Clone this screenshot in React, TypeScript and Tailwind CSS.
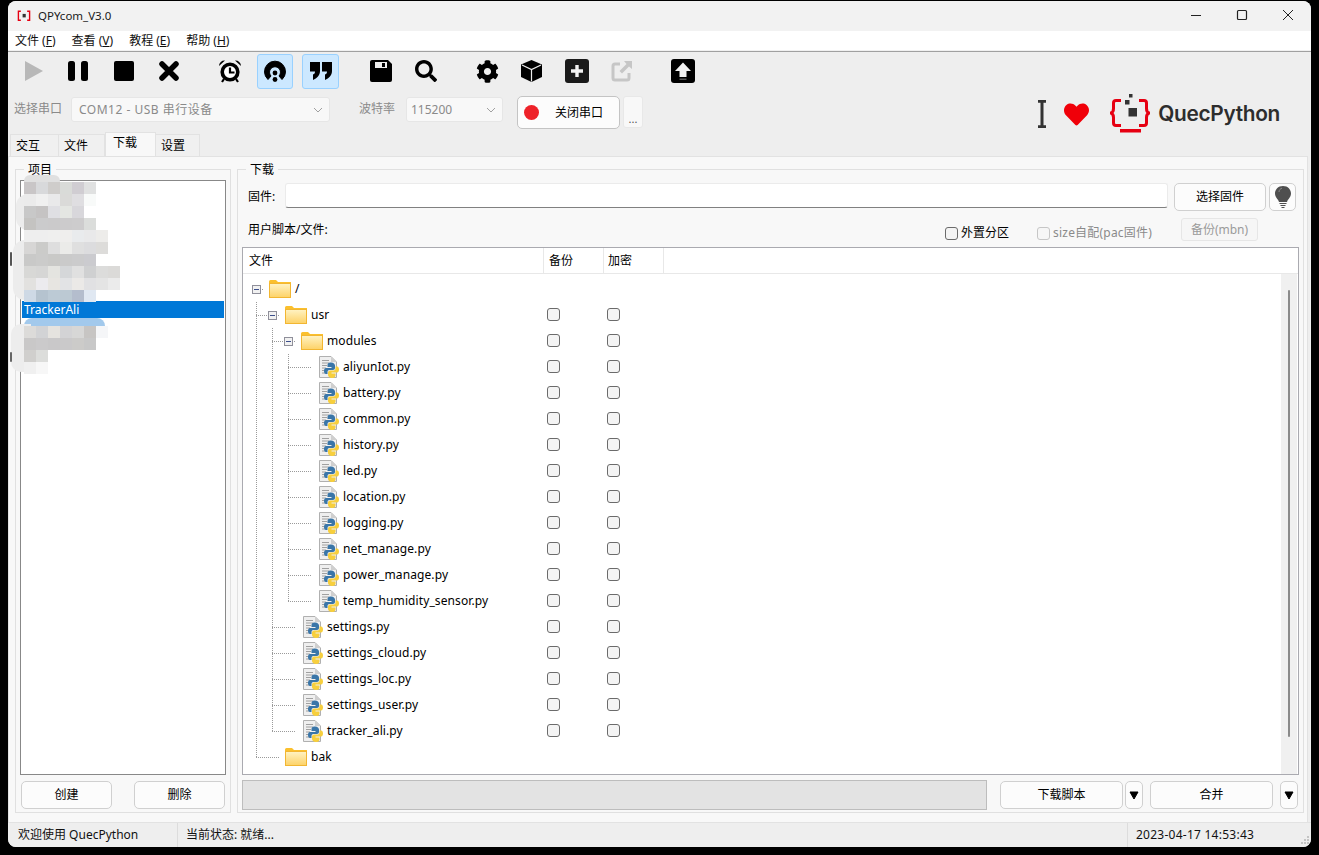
import { FaSearch, FaCog, FaHeart } from 'react-icons/fa';

const FONT = "font-['Noto_Sans','Noto_Sans_CJK_SC',sans-serif]";

function Folder() {
  return (
    <svg width="22" height="18" viewBox="0 0 22 18" className="shrink-0">
      <defs>
        <linearGradient id="fg" x1="0" y1="0" x2="0" y2="1">
          <stop offset="0" stopColor="#fff3c4" />
          <stop offset="1" stopColor="#fdd267" />
        </linearGradient>
      </defs>
      <path d="M0 1.5 Q0 0 1.5 0 H7 L9 2 H22 V6 H0 Z" fill="#fbc02d" />
      <rect x="0.5" y="3.5" width="21" height="14" fill="url(#fg)" stroke="#f2b632" />
    </svg>
  );
}

function PyFile() {
  return (
    <svg width="22" height="24" viewBox="0 0 22 24" className="shrink-0">
      <path d="M2.5 1.5 H14 L19.5 7 V22.5 H2.5 Z" fill="#efefef" stroke="#b0b0b0" />
      <path d="M14 1.5 V7 H19.5 Z" fill="#cfcfcf" />
      <path d="M5 5.5 H12 M5 8 H12 M5 10.5 H10 M5 13 H9 M5 15.5 H8 M5 18 H8" stroke="#a0a0a0" strokeWidth="1" />
      <path d="M14 7.5 C11 7.5 10.5 9 10.5 10.5 V12 H14.5 V13 H9 C7.5 13 7 14.5 7 16 C7 17.5 7.5 19 9 19 H10.5 V17 C10.5 15.5 11.5 15 13 15 H16 C17 15 18 14 18 13 V10.5 C18 9 16.5 7.5 14 7.5 Z" fill="#3a76a8" />
      <path d="M15 23 C18 23 18.5 21.5 18.5 20 V18.5 H14.5 V17.5 H20 C21.5 17.5 22 16 22 14.5 C22 13 21.5 11.5 20 11.5 H18.5 V13.5 C18.5 15 17.5 15.5 16 15.5 H13 C12 15.5 11 16.5 11 17.5 V20 C11 21.5 12.5 23 15 23 Z" fill="#f7cf3d" />
    </svg>
  );
}

function Expander() {
  return (
    <span className="w-[9px] h-[9px] border border-[#8f8f9a] bg-[#f1f1f1] flex items-center justify-center">
      <span className="w-[5px] h-px bg-[#3c4f8c]" />
    </span>
  );
}

// one 16px cell of tree line: v = vertical part, h = horizontal part
function TreeCell({ v, h, half, full, exp }: { v?: boolean; h?: boolean; half?: boolean; full?: boolean; exp?: boolean }) {
  return (
    <span className="relative w-[16px] h-[26px] shrink-0 flex items-center justify-center">
      <svg width="16" height="26" className="block" shapeRendering="crispEdges">
        {v && <line x1="8.5" y1="0" x2="8.5" y2={half ? 14 : 26} stroke="#9a9a9a" strokeDasharray="1 1" />}
        {h && <line x1={full ? 0 : 8} y1="13.5" x2="16" y2="13.5" stroke="#9a9a9a" strokeDasharray="1 1" />}
      </svg>
      {exp && (
        <span className="absolute inset-0 flex items-center justify-center">
          <Expander />
        </span>
      )}
    </span>
  );
}

type Row = { name: string; depth: number; kind: 'dir' | 'py'; open?: boolean; guides: number[]; last?: boolean; check?: boolean };

const rows: Row[] = [
  { name: '/', depth: 0, kind: 'dir', open: true, guides: [] },
  { name: 'usr', depth: 1, kind: 'dir', open: true, guides: [0], check: true },
  { name: 'modules', depth: 2, kind: 'dir', open: true, guides: [0, 1], check: true },
  ...['aliyunIot.py', 'battery.py', 'common.py', 'history.py', 'led.py', 'location.py', 'logging.py', 'net_manage.py', 'power_manage.py'].map(
    (name): Row => ({ name, depth: 3, kind: 'py', guides: [0, 1, 2], check: true }),
  ),
  { name: 'temp_humidity_sensor.py', depth: 3, kind: 'py', guides: [0, 1, 2], last: true, check: true },
  ...['settings.py', 'settings_cloud.py', 'settings_loc.py', 'settings_user.py'].map(
    (name): Row => ({ name, depth: 2, kind: 'py', guides: [0, 1], check: true }),
  ),
  { name: 'tracker_ali.py', depth: 2, kind: 'py', guides: [0, 1], last: true, check: true },
  { name: 'bak', depth: 1, kind: 'dir', guides: [0], last: true },
];

function Check({ disabled }: { disabled?: boolean }) {
  return (
    <span
      className={
        disabled
          ? 'block w-[13px] h-[13px] rounded-[3px] border border-[#c6c6c6] bg-[#f6f6f6] shrink-0'
          : 'block w-[13px] h-[13px] rounded-[3px] border-[1.5px] border-[#6b6b6b] bg-[#f4f4f4] shrink-0'
      }
    />
  );
}

function TreeRow({ row }: { row: Row }) {
  return (
    <div className="flex items-center h-[26px]">
      <div className="flex items-center w-[301px] shrink-0">
        {row.guides.map((g, i) => {
          const isLastGuide = i === row.guides.length - 1;
          return <TreeCell key={g} v h={isLastGuide} half={isLastGuide && row.last} />;
        })}
        <TreeCell h full={row.depth > 0} exp={row.open} />
        <span className="ml-[5px]">{row.kind === 'dir' ? <Folder /> : <PyFile />}</span>
        <span className="ml-[4px] text-[12px] tracking-[0.1px] text-black whitespace-nowrap leading-none">{row.name}</span>
      </div>
      {row.check && (
        <div className="flex items-center gap-[47px] ml-[-2px] mt-[-1px]">
          <Check />
          <Check />
        </div>
      )}
    </div>
  );
}

function PlayIcon() {
  return (
    <svg width="18" height="20" viewBox="0 0 18 20">
      <path d="M0 0 L18 10 L0 20 Z" fill="#b8b8b8" />
    </svg>
  );
}

function PauseIcon() {
  return (
    <svg width="20" height="20" viewBox="0 0 20 20">
      <rect x="0" y="0" width="7" height="20" rx="2.5" fill="#000" />
      <rect x="13" y="0" width="7" height="20" rx="2.5" fill="#000" />
    </svg>
  );
}

function StopIcon() {
  return (
    <svg width="20" height="20" viewBox="0 0 20 20">
      <rect width="20" height="20" rx="2" fill="#000" />
    </svg>
  );
}

function CloseIcon() {
  return (
    <svg width="20" height="20" viewBox="0 0 20 20">
      <path d="M3 3 L17 17 M17 3 L3 17" stroke="#000" strokeWidth="5.500" strokeLinecap="round" />
    </svg>
  );
}

function AlarmIcon() {
  return (
    <svg width="24" height="24" viewBox="0 0 24 24">
      <circle cx="12" cy="13" r="7.800" fill="#fff" stroke="#000" strokeWidth="3.600" />
      <path d="M12 8.500 V13.500 H16.500" fill="none" stroke="#000" strokeWidth="2.200" />
      <path d="M1 7 A5.500 5.500 0 0 1 7 1.500 Z M23 7 A5.500 5.500 0 0 0 17 1.500 Z" fill="#000" />
      <path d="M6 20 L4 23 M18 20 L20 23" stroke="#000" strokeWidth="2.200" />
    </svg>
  );
}

function RingIcon() {
  return (
    <svg width="24" height="24" viewBox="0 0 24 24">
      <path d="M5 20.500 A10.500 10.500 0 1 1 19 20.500 L16 17 A5.500 5.500 0 1 0 8 17 Z" fill="#000" stroke="#000" strokeWidth="1" strokeLinejoin="round" />
      <circle cx="12" cy="14" r="2.400" fill="#000" />
      <circle cx="12" cy="20.500" r="2.400" fill="#000" />
    </svg>
  );
}

function QuoteIcon() {
  return (
    <svg width="22" height="18" viewBox="0 0 22 18">
      <path d="M0 0 H10 V9 C10 13 7 16.500 3 18 L3 12.500 C4.500 12 5 11 5 9.500 H0 Z" fill="#000" />
      <path d="M12 0 H22 V9 C22 13 19 16.500 15 18 L15 12.500 C16.500 12 17 11 17 9.500 H12 Z" fill="#000" />
    </svg>
  );
}

function SaveIcon() {
  return (
    <svg width="22" height="22" viewBox="0 0 22 22">
      <path d="M2 0 H18 L22 4 V20 Q22 22 20 22 H2 Q0 22 0 20 V2 Q0 0 2 0 Z" fill="#000" />
      <rect x="5" y="2" width="12" height="6" fill="#eeeeee" />
      <rect x="12" y="3" width="3" height="4" fill="#000" />
    </svg>
  );
}

function CubeIcon() {
  return (
    <svg width="21" height="22" viewBox="0 0 21 22">
      <path d="M10.500 0 L21 4.500 V17 L10.500 22 L0 17 V4.500 Z" fill="#000" />
      <path d="M1 5 L10.500 9.500 L20 5 M10.500 9.500 V21.500" fill="none" stroke="#eeeeee" strokeWidth="1.200" />
    </svg>
  );
}

function ExportIcon() {
  return (
    <svg width="22" height="22" viewBox="0 0 22 22">
      <path d="M9 4 H4 Q2 4 2 6 V18 Q2 20 4 20 H16 Q18 20 18 18 V13" fill="none" stroke="#c6c6c6" strokeWidth="3" />
      <path d="M13 1 H21 V9 L18 6.500 L11 13.500 L8.500 11 L15.500 4 Z" fill="#c6c6c6" />
    </svg>
  );
}

function UploadIcon() {
  return (
    <svg width="24" height="24" viewBox="0 0 24 24">
      <rect width="24" height="24" rx="3" fill="#000" />
      <path d="M12 3.500 L20 12 H15.500 V18 H8.500 V12 H4 Z" fill="#f2f2f2" />
      <rect x="8.500" y="19.500" width="7" height="1.500" fill="#555" />
    </svg>
  );
}

function PlusIcon() {
  return (
    <svg width="24" height="24" viewBox="0 0 24 24">
      <rect width="24" height="24" rx="3" fill="#1a1a1a" />
      <path d="M12 6 V18 M6 12 H18" stroke="#f2f2f2" strokeWidth="3.400" />
    </svg>
  );
}

function BulbIcon() {
  return (
    <svg width="18" height="24" viewBox="0 0 18 24">
      <path d="M9 1 C4 1 1 4.600 1 8.600 C1 12.500 4 14 5 17 H13 C14 14 17 12.500 17 8.600 C17 4.600 14 1 9 1 Z" fill="#4f4f4f" />
      <path d="M5 7 C5 5 6.500 3.500 8 3.200" fill="none" stroke="#8a8a8a" strokeWidth="1" />
      <path d="M5.500 18.500 H12.500 M6.500 20.500 H11.500 M7.500 22.500 H10.500" stroke="#4f4f4f" strokeWidth="1" />
    </svg>
  );
}

function Logo() {
  return (
    <svg width="40" height="40" viewBox="0 0 40 40">
      <path d="M11 6.500 H6 Q3.500 6.500 3.500 9 V14.500 Q3.500 18 1 19 Q3.500 20 3.500 23.500 V29 Q3.500 31.500 6 31.500 H11" fill="none" stroke="#e60012" strokeWidth="3" />
      <path d="M29 6.500 H34 Q36.500 6.500 36.500 9 V14.500 Q36.500 18 39 19 Q36.500 20 36.500 23.500 V29 Q36.500 31.500 34 31.500 H29" fill="none" stroke="#e60012" strokeWidth="3" />
      <rect x="10" y="35" width="21" height="3.500" fill="#e60012" />
      <rect x="19" y="0" width="3.500" height="3.500" fill="#333" />
      <rect x="15" y="6" width="4.500" height="4.500" fill="#333" />
      <rect x="18.500" y="14" width="8.500" height="8.500" fill="#333" />
    </svg>
  );
}

const btn = 'flex items-center justify-center rounded-[5px] border border-[#d0d0d0] bg-[#fcfcfc] text-[12px] text-black';
const slot = 'w-[36px] h-[36px] flex items-center justify-center';

const mosaic: string[][] = [
  ['bg-[#c9c6c7]', 'bg-[#d8d9db]', 'bg-[#cfcdcb]', 'bg-[#d9dbd8]', 'bg-[#d0cdd2]', 'bg-[#e0e1e1]'],
  ['bg-[#ebebeb]', 'bg-[#f0f0f0]', 'bg-[#e9e9ea]', 'bg-[#dadad8]', 'bg-[#dfdee1]', 'bg-[#f8faf9]'],
  ['bg-[#c8c8c8]', 'bg-[#c5c3c3]', 'bg-[#dfdfe3]', 'bg-[#e4e6e2]', 'bg-[#d8d7db]'],
  ['bg-[#c4c3c1]', 'bg-[#cbcbcc]', 'bg-[#cbcacb]', 'bg-[#cccbcc]', 'bg-[#cdcccd]', 'bg-[#dbdddb]'],
  ['bg-[#eeeeee]', 'bg-[#eeeeee]', 'bg-[#efefee]', 'bg-[#efeeed]', 'bg-[#e9ebed]', 'bg-[#e9e9ea]', 'bg-[#edecea]'],
  ['bg-[#d7d6d5]', 'bg-[#cbcbc9]', 'bg-[#dedede]', 'bg-[#ebebe9]', 'bg-[#dfdfdf]', 'bg-[#dcdcde]', 'bg-[#dddcda]'],
  ['bg-[#c9c9c8]', 'bg-[#cbcbca]', 'bg-[#c9c9c7]', 'bg-[#cacaca]', 'bg-[#cbcbcc]', 'bg-[#cbcbcf]'],
  ['bg-[#d8d8d6]', 'bg-[#d6d6d5]', 'bg-[#e4e4e0]', 'bg-[#d5d7d9]', 'bg-[#e0e0e0]', 'bg-[#cfd0d1]', 'bg-[#dcdcdb]', 'bg-[#dbdad8]'],
  ['bg-[#e2e1df]', 'bg-[#ecebee]', 'bg-[#e7e5e1]', 'bg-[#e2e3e5]', 'bg-[#ebe9e7]', 'bg-[#e1e1e3]', 'bg-[#e4e4e4]', 'bg-[#ebebeb]'],
  ['bg-[#ced9e5]', 'bg-[#b5c3cf]', 'bg-[#bccad5]', 'bg-[#bcc9d3]', 'bg-[#b4bdcd]', 'bg-[#e0e8f2]'],
];
const mosaic2: string[][] = [
  ['bg-[#dcdbd9]', 'bg-[#d2d3d5]', 'bg-[#e5e3df]', 'bg-[#d3d3d5]', 'bg-[#d7d7d6]', 'bg-[#c7c5c3]', 'bg-[#f5f6f8]'],
  ['bg-[#c9c8c8]', 'bg-[#cbcacb]', 'bg-[#c9c8c9]', 'bg-[#cac9ca]', 'bg-[#cccbc9]', 'bg-[#c8c8c8]'],
  ['bg-[#d0cfcd]', 'bg-[#dcdddb]'],
  ['bg-[#f0f0f0]', 'bg-[#f7f7f7]'],
];

function MosaicRows({ data }: { data: string[][] }) {
  return (
    <>
      {data.map((r, i) => (
        <div key={i} className="flex h-[12px] ml-[8px]">
          {r.map((c, j) => (
            <span key={j} className={`block w-[12px] h-[12px] ${c}`} />
          ))}
        </div>
      ))}
    </>
  );
}

export default function App() {
  return (
    <div className={`w-[1319px] h-[855px] bg-black pt-px px-[8px] pb-[8px] overflow-hidden ${FONT}`}>
      <div className="relative w-[1303px] h-[846px] flex flex-col rounded-[8px] bg-[#eeeeee]">
        {/* title bar */}
        <div className="h-[30px] shrink-0 bg-[#f2f2f2] rounded-t-[8px] flex items-center">
          <svg width="14" height="14" viewBox="0 0 40 40" className="ml-[9px]">
            <path d="M11 6.500 H4 V32 H11 M29 6.500 H36 V32 H29" fill="none" stroke="#e60012" strokeWidth="4" />
            <rect x="16" y="14" width="9" height="10" fill="#333" />
          </svg>
          <span className="ml-[7px] text-[11.5px] text-[#1a1a1a]">QPYcom_V3.0</span>
          <div className="ml-auto flex items-center text-black">
            <svg width="46" height="30" viewBox="0 0 46 30"><path d="M18 14.500 H28" stroke="#222" strokeWidth="1" /></svg>
            <svg width="46" height="30" viewBox="0 0 46 30"><rect x="18.500" y="9.500" width="9" height="9" rx="1" fill="none" stroke="#222" strokeWidth="1.200" /></svg>
            <svg width="46" height="30" viewBox="0 0 46 30"><path d="M18 9 L28 19 M28 9 L18 19" stroke="#222" strokeWidth="1" /></svg>
          </div>
        </div>

        {/* menu */}
        <div className="h-[19px] shrink-0 bg-white flex items-center pl-[7px] gap-[16px] text-[12px] text-[#111] leading-none">
          <span>文件 (<u>F</u>)</span>
          <span>查看 (<u>V</u>)</span>
          <span>教程 (<u>E</u>)</span>
          <span>帮助 (<u>H</u>)</span>
        </div>
        <div className="h-px shrink-0 bg-[#f0f0f0]" />
        <div className="h-px shrink-0 bg-[#a0a0a0]" />

        {/* toolbar */}
        <div className="h-[36px] mt-px shrink-0 flex items-center pl-[8px]">
          <span className={slot}><PlayIcon /></span>
          <span className={`${slot} ml-[8px]`}><PauseIcon /></span>
          <span className={`${slot} ml-[10px]`}><StopIcon /></span>
          <span className={`${slot} ml-[9px]`}><CloseIcon /></span>
          <span className={`${slot} ml-[25px]`}><AlarmIcon /></span>
          <span className="w-[36px] h-[35px] ml-[9px] flex items-center justify-center rounded-[3px] border border-[#99d1ff] bg-[#cce8ff]"><RingIcon /></span>
          <span className="w-[37px] h-[35px] ml-[9px] flex items-center justify-center rounded-[3px] border border-[#99d1ff] bg-[#cce8ff]"><QuoteIcon /></span>
          <span className={`${slot} ml-[24px]`}><SaveIcon /></span>
          <span className={`${slot} ml-[9px]`}><FaSearch size={22} color="#000" /></span>
          <span className={`${slot} ml-[25px]`}><FaCog size={23} color="#000" /></span>
          <span className={`${slot} ml-[8px]`}><CubeIcon /></span>
          <span className={`${slot} ml-[10px]`}><PlusIcon /></span>
          <span className={`${slot} ml-[9px]`}><ExportIcon /></span>
          <span className={`${slot} ml-[25px]`}><UploadIcon /></span>
        </div>

        {/* port row */}
        <div className="h-[36px] mt-[7px] shrink-0 flex items-start pl-[6px]">
          <span className="w-[57px] mt-[5px] text-[12px] text-[#8a8a8a] leading-[16px]">选择串口</span>
          <div className="w-[259px] h-[25px] mt-px flex items-center rounded-[3px] border border-[#e6e6e6] bg-[#f8f8f8] pl-[7px] pr-[6px] text-[12px] text-[#8a8a8a]">
            <span className="tracking-[0.5px]">COM12 - USB 串行设备</span>
            <svg width="10" height="6" viewBox="0 0 10 6" className="ml-auto"><path d="M1 1 L5 5 L9 1" fill="none" stroke="#a0a0a0" /></svg>
          </div>
          <span className="ml-[29px] w-[47px] mt-[5px] text-[12px] text-[#8a8a8a] leading-[16px]">波特率</span>
          <div className="w-[97px] h-[25px] mt-px flex items-center rounded-[3px] border border-[#e6e6e6] bg-[#f8f8f8] pl-[4px] pr-[6px] text-[12px] text-[#8a8a8a]">
            <span>115200</span>
            <svg width="10" height="6" viewBox="0 0 10 6" className="ml-auto"><path d="M1 1 L5 5 L9 1" fill="none" stroke="#a0a0a0" /></svg>
          </div>
          <div className="ml-[14px] w-[103px] h-[33px] flex items-center rounded-[5px] border border-[#c4c4c4] bg-[#fcfcfc]">
            <span className="ml-[6px] w-[15px] h-[15px] rounded-full bg-[#ee2229]" />
            <span className="ml-[16px] text-[12px] text-black">关闭串口</span>
          </div>
          <div className="ml-[3px] w-[20px] h-[32px] flex items-end justify-center rounded-[3px] border border-[#e8e8e8] bg-[#f8f8f8] text-[11px] text-[#555] leading-[16px]">...</div>
          <div className="ml-auto flex items-center mr-[31px] mt-[-2px]">
            <svg width="8" height="28" viewBox="0 0 8 28">
              <path d="M0 1.200 H8 M0 26.800 H8 M4 1 V27" stroke="#333" strokeWidth="3" />
            </svg>
            <span className="ml-[18px]"><FaHeart size={25} color="#f00009" /></span>
            <span className="ml-[21px]"><Logo /></span>
            <span className="ml-[8px] text-[20.8px] font-['Inter',sans-serif] font-semibold text-[#2d2d2d] tracking-[-0.3px]">QuecPython</span>
          </div>
        </div>

        {/* tabs */}
        <div className="h-[23px] mt-[1px] shrink-0 flex items-end pl-[2px] relative z-10">
          <span className="w-[49px] h-[22px] flex items-center pl-[5px] bg-[#f0f0f0] border border-[#e2e2e2] border-b-0 text-[12px] text-black">交互</span>
          <span className="w-[46px] h-[22px] flex items-center pl-[5px] bg-[#f0f0f0] border-t border-r border-[#e2e2e2] text-[12px] text-black">文件</span>
          <span className="w-[51px] h-[24px] flex items-center pl-[7px] pb-[3px] bg-[#f8f8f8] border-t border-x border-[#e2e2e2] text-[12px] text-black">下载</span>
          <span className="w-[44px] h-[22px] flex items-center pl-[5px] bg-[#f0f0f0] border-t border-r border-[#e2e2e2] text-[12px] text-black">设置</span>
        </div>

        {/* main panel */}
        <div className="h-[666px] mr-[3px] shrink-0 flex bg-[#f8f8f8] border-t border-x border-[#e2e2e2] pl-[6px] pt-[12px]">
          {/* project box */}
          <div className="relative w-[216px] h-[644px] shrink-0 border border-[#e0e0e0] flex flex-col pl-[4px] pr-[4px]">
            <span className="absolute left-[8px] top-[-6px] px-[4px] bg-[#f8f8f8] text-[12px] leading-[12px] text-black">项目</span>
            <div className="mt-[10px] h-[595px] w-[206px] border border-[#888] bg-white flex flex-col pt-[120px]">
              <div className="h-[17px] w-[202px] ml-px bg-[#0078d7] text-white text-[12px] leading-[17px] pl-[2px]">TrackerAli</div>
            </div>
            <div className="mt-[6px] flex justify-between ml-[1px] mr-px">
              <button className={`${btn} w-[91px] h-[28px]`}>创建</button>
              <button className={`${btn} w-[91px] h-[28px]`}>删除</button>
            </div>
          </div>

          {/* download box */}
          <div className="relative ml-[6px] w-[1067px] h-[644px] border border-[#e0e0e0] flex flex-col">
            <span className="absolute left-[8px] top-[-6px] px-[4px] bg-[#f8f8f8] text-[12px] leading-[12px] text-black">下载</span>
            <div className="h-[26px] mt-[14px] flex items-center">
              <span className="ml-[10px] w-[37px] text-[12px] text-black">固件:</span>
              <div className="w-[883px] h-[25px] self-start mt-[-1px] bg-white border border-[#ebebeb] border-b-[#808080] rounded-[3px]" />
              <button className={`${btn} ml-[6px] w-[92px] h-[28px]`}>选择固件</button>
              <span className={`${btn} ml-[3px] w-[27px] h-[28px]`}><BulbIcon /></span>
            </div>
            <div className="h-[33px] flex items-start relative">
              <span className="ml-[10px] mt-[12px] text-[12px] leading-[16px] text-black">用户脚本/文件:</span>
              <div className="ml-auto flex items-center mt-[15px] mr-[45px]">
                <Check />
                <span className="ml-[3px] text-[12px] text-black leading-[16px]">外置分区</span>
                <span className="ml-[28px]"><Check disabled /></span>
                <span className="ml-[3px] text-[12px] tracking-[0.2px] text-[#8a8a8a] leading-[16px]">size自配(pac固件)</span>
                <span className="ml-[29px] w-[77px] h-[23px] mt-[-7px] flex items-center justify-center rounded-[3px] border border-[#e6e6e6] bg-[#f6f6f6] text-[12px] text-[#9a9a9a]">备份(mbn)</span>
              </div>
            </div>

            {/* file tree */}
            <div className="ml-[4px] w-[1057px] h-[528px] mt-[4px] border border-[#aaaab0] bg-white flex flex-col">
              <div className="h-[26px] shrink-0 flex items-center border-b border-[#e8e8e8] text-[12px] text-black">
                <span className="w-[301px] h-full flex items-center pl-[6px] border-r border-[#e8e8e8]">文件</span>
                <span className="w-[60px] h-full flex items-center pl-[5px] border-r border-[#e8e8e8]">备份</span>
                <span className="w-[60px] h-full flex items-center pl-[4px] border-r border-[#e8e8e8]">加密</span>
              </div>
              <div className="flex-1 flex min-h-0">
                <div className="flex-1 pl-[5px] pt-[2px] overflow-hidden">
                  {rows.map((r) => (
                    <TreeRow key={r.name} row={r} />
                  ))}
                </div>
                <div className="w-[16px] shrink-0 bg-[#f0f0f0] flex justify-center mr-px pt-[16px]">
                  <span className="w-[2px] h-[447px] rounded-full bg-[#8a8a8a]" />
                </div>
              </div>
            </div>

            {/* bottom actions */}
            <div className="flex items-center mt-[5px] ml-[4px]">
              <div className="w-[745px] h-[30px] bg-[#e3e3e3] border border-[#bdbdbd]" />
              <button className={`${btn} ml-[13px] w-[123px] h-[28px]`}>下载脚本</button>
              <span className={`${btn} ml-[2px] w-[18px] h-[28px]`}><svg width="10" height="9" viewBox="0 0 10 9"><path d="M1 1 H9 L5 8 Z" fill="#000" stroke="#000" /></svg></span>
              <button className={`${btn} ml-[7px] w-[123px] h-[28px]`}>合并</button>
              <span className={`${btn} ml-[7px] w-[18px] h-[28px]`}><svg width="10" height="9" viewBox="0 0 10 9"><path d="M1 1 H9 L5 8 Z" fill="#000" stroke="#000" /></svg></span>
            </div>
          </div>
        </div>

        {/* status bar */}
        <div className="flex-1 flex items-center border-t border-[#e2e2e2] bg-[#eeeeee] rounded-b-[8px] text-[12px] text-[#111]">
          <span className="w-[170px] h-full flex items-center pl-[10px] border-r border-[#dcdcdc]">欢迎使用 QuecPython</span>
          <span className="pl-[8px]">当前状态: 就绪...</span>
          <span className="ml-auto w-[184px] h-full flex items-center pl-[8px] tracking-[0.25px] border-l border-[#dcdcdc]">2023-04-17 14:53:43</span>
        </div>
        <svg width="10" height="10" viewBox="0 0 10 10" className="absolute right-[2px] bottom-[2px]">
          <path d="M8 1 h2 v2 h-2 z M5 4 h2 v2 h-2 z M8 4 h2 v2 h-2 z M2 7 h2 v2 h-2 z M5 7 h2 v2 h-2 z M8 7 h2 v2 h-2 z" fill="#c4c4c4" />
        </svg>

        {/* blurred project names, painted over the list */}
        <div className="absolute left-[8px] top-[181px] w-[120px] pointer-events-none">
          <span className="absolute left-[8px] top-[-7px] w-[36px] h-[10px] rounded-t-[6px] bg-[#e0e0e0]" />
          <span className="absolute left-0 top-[12px] w-[20px] h-[36px] rounded-l-[12px] bg-[#ececec]" />
          <span className="absolute left-[-3px] top-[58px] w-[20px] h-[60px] rounded-l-[12px] bg-[#ececec]" />
          <span className="absolute left-[-6px] top-[70px] w-[2px] h-[14px] rounded-full bg-[#555]" />
          <div className="relative">
            <MosaicRows data={mosaic} />
          </div>
        </div>
        <div className="absolute left-[8px] top-[325px] w-[120px] pointer-events-none">
          <span className="absolute left-[8px] top-[-8px] w-[81px] h-[8px] rounded-t-[8px] bg-[#a2c9ec]" />
          <span className="absolute left-[-5px] top-[-2px] w-[20px] h-[48px] rounded-l-[10px] bg-[#ededed]" />
          <span className="absolute left-[-6px] top-[26px] w-[2px] h-[10px] rounded-full bg-[#666]" />
          <div className="relative">
            <MosaicRows data={mosaic2} />
          </div>
        </div>
      </div>
    </div>
  );
}
